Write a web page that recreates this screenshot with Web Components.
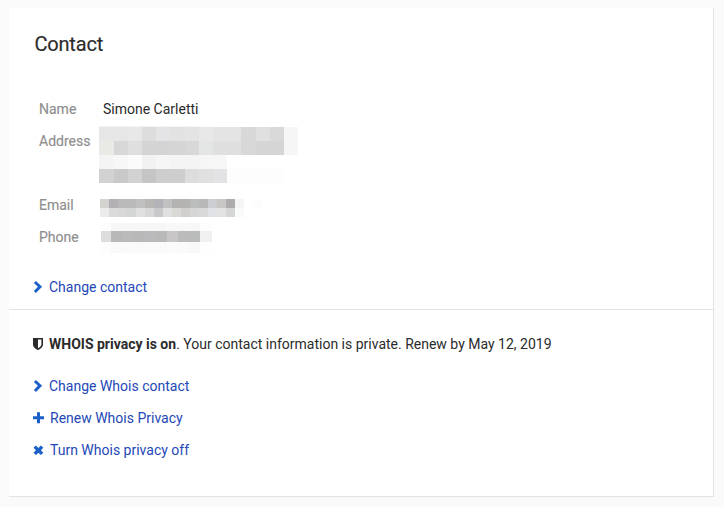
<!DOCTYPE html>
<html lang="en">
<head>
<meta charset="utf-8">
<title>Contact</title>
<style>
html,body{margin:0;height:100%}
body{background:#fafafa;font:14px/20px Roboto,"Liberation Sans",sans-serif;color:#2b2b2b;overflow:hidden}
</style>
</head>
<body>
<contact-page></contact-page>
<script>
class BaseElement extends HTMLElement {
  constructor() { super(); this.attachShadow({mode:'open'}); }
  connectedCallback() { this.shadowRoot.innerHTML = this.render(); }
}

const icons = {
  chevron: '<path d="M.9 2 2.9-.1 9.1 5.8 2.9 12 .9 9.9 4.9 5.8Z"/>',
  plus: '<path d="M4 .2h3v4h4v3H7v4H4v-4H0v-3h4Z"/>',
  cross: '<path d="M2.9 1.5 5.4 4 7.9 1.5 10.3 3.8 7.9 6.3 10.3 8.8 7.9 11.1 5.4 8.7 2.9 11.1.5 8.8 2.9 6.3.5 3.8Z"/>',
  shield: '<path fill-rule="evenodd" d="M0 0h10v6.4C10 9 7.2 11 5 12 2.8 11 0 9 0 6.4ZM5 1.6v8.6c1.7-.9 3.4-2.2 3.4-3.9V1.6Z"/>'
};
customElements.define('ui-icon', class extends BaseElement {
  render() {
    return `<style>:host{display:block;width:12px;height:12px}svg{display:block;fill:currentColor;overflow:visible}</style>
    <svg width="12" height="12" viewBox="0 0 12 12">${icons[this.getAttribute('name')]}</svg>`;
  }
});

customElements.define('action-link', class extends BaseElement {
  render() {
    return `<style>:host{display:flex;height:20px;align-items:center;color:#2448b8}
    ui-icon{color:#1b5fc9;margin-right:var(--gap,4px)}a{color:inherit;text-decoration:none;white-space:nowrap}</style>
    <ui-icon name="${this.getAttribute('icon')}"></ui-icon><a><slot></slot></a>`;
  }
});

customElements.define('contact-field', class extends BaseElement {
  render() {
    return `<style>:host{display:grid;grid-template-columns:60px 1fr;height:var(--h,32px);align-items:start}
    .label{color:#8e8e8e;-webkit-text-stroke:.15px}</style>
    <div class="label">${this.getAttribute('label')}</div><div><slot></slot></div>`;
  }
});

/* Pixelated block standing in for a private value. */
const mosaics = {
  address: {
    cols:[15,14,14,14,14,15,14,14,14,14,15,14,14,14], rows:[1,14,14,14,14],
    data:['f4 f4 f4 f4 f4 f4 f4',
      'e6 e6 e8 dd e4e4e7 e2 e4 e8 e4 e4 d8 e0 d9 f6',
      'e9e9e6 d7 df d4 d4 d5 d8 e4e6e5 df df d8 d5 d5 f6',
      'f4 f7 fb f2 f6 f4 f4 f6 f7',
      'd2 c9 d2 c5 ce ce dd e0 e3e3e6 fd fd fd fd']
  },
  email: {
    cols:[9,9,9,9,9,9,9,9,9,9,9,9,9,9,9,9,9,9], rows:[9,9],
    data:['d4d3d0 b2b0b5 b9 b9 c0 b9b6b4 b3b2b7 c1 b4b3b1 b5b4b2 bbbdbc b8 cccdd0 c8c7c5 aeacaf f5 ff fd',
      'eb dadadb d8 d4d6d6 e0 d8 c9c9cb e0 dad8d5 d0cfce d6 d9 e0e1e5 e3 d6 f9fbfb']
  },
  phone: {
    cols:[10,11,11,12,11,11,11,11,11,12], rows:[8,11,11],
    data:['fd f7 f7 f7 f7 f7 f8 f8 f7 fd',
      'dd b8 ba b8 bab9bc b9 c8c6c7 bb babcbb f0',
      'fd f9 fa fa fa fa fb fa f8 fe']
  }
};
customElements.define('redacted-value', class extends BaseElement {
  render() {
    const m = mosaics[this.getAttribute('kind')];
    const cells = m.data.flatMap(row => {
      const c = row.split(' ');
      return m.cols.map((_, i) => c[i] ? `<i style="background:#${c[i].length === 2 ? c[i].repeat(3) : c[i]}"></i>` : '<i></i>');
    }).join('');
    return `<style>:host{display:grid;justify-content:start;grid-template-columns:${m.cols.map(n=>n+'px').join(' ')};grid-template-rows:${m.rows.map(n=>n+'px').join(' ')}}</style>${cells}`;
  }
});

customElements.define('contact-page', class extends BaseElement {
  render() {
    return `<style>
    :host{display:flow-root;box-sizing:border-box;width:705px;height:489px;margin:8px 0 0 9px;background:#fff;border:solid #e3e3e3;border-width:0 1px 1px 0}
    .top{box-sizing:border-box;height:302px;border-bottom:1px solid #e3e3e3;padding:24px 24px 0}
    h1{margin:0 0 43px 1.5px;font-size:20px;line-height:24px;font-weight:400;letter-spacing:-.2px;-webkit-text-stroke:.15px}
    .fields{margin-left:6px;height:178px}
    .value{display:block;padding-left:4px}
    .bottom{display:grid;gap:12px;padding:24px 24px 0}
    .notice{display:flex;align-items:center;height:20px;margin-bottom:10px}
    .notice ui-icon{margin-right:4px}
    b{font-weight:700}
    </style>
    <section class="top"><h1>Contact</h1>
      <div class="fields">
        <contact-field label="Name"><span class="value">Simone Carletti</span></contact-field>
        <contact-field label="Address" style="--h:64px"><redacted-value kind="address" style="margin:-5px 0 0 0"></redacted-value></contact-field>
        <contact-field label="Email"><redacted-value kind="email" style="margin:4px 0 0 1px"></redacted-value></contact-field>
        <contact-field label="Phone"><redacted-value kind="phone" style="margin:-4px 0 0 2px"></redacted-value></contact-field>
      </div>
      <action-link icon="chevron">Change contact</action-link>
    </section>
    <section class="bottom">
      <div class="notice"><ui-icon name="shield"></ui-icon><span><b>WHOIS privacy is on</b>. Your contact information is private. Renew by May 12, 2019</span></div>
      <action-link icon="chevron">Change Whois contact</action-link>
      <action-link icon="plus" style="--gap:5px">Renew Whois Privacy</action-link>
      <action-link icon="cross" style="--gap:5px">Turn Whois privacy off</action-link>
    </section>`;
  }
});
</script>
</body>
</html>
